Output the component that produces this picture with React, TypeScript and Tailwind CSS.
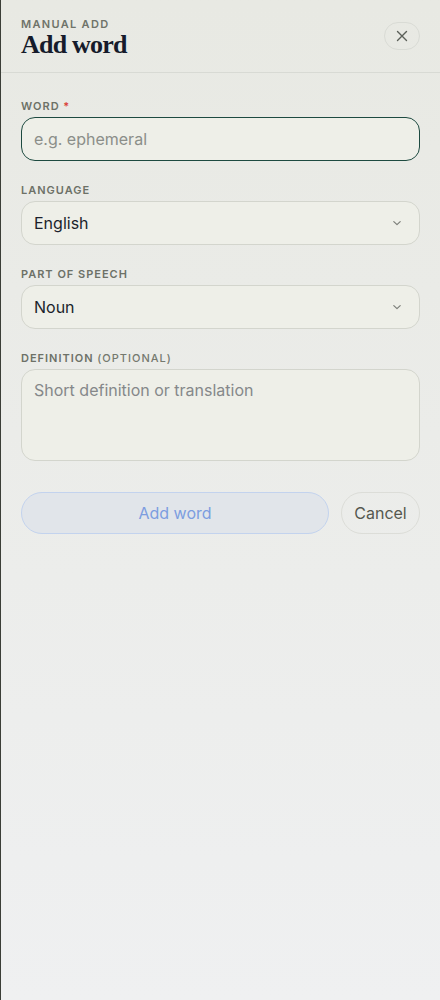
import React from "react";

function Chevron() {
  return (
    <svg width="10" height="10" viewBox="0 0 10 10" fill="none" className="absolute right-[17px] top-1/2 -translate-y-1/2">
      <path d="M1.8 3.6 L5 6.6 L8.2 3.6" stroke="#7c7f79" strokeWidth="1.2" strokeLinecap="round" strokeLinejoin="round" />
    </svg>
  );
}

const labelCls =
  "block mb-[3px] pt-[1px] text-[11px] leading-4 font-semibold tracking-[0.09em] uppercase text-[#6d7167]";

export default function App() {
  return (
    <div
      className="w-[440px] h-[1000px] border-l border-[#3b3e37] bg-gradient-to-b from-[#e8e9e3] to-[#eff0f1] flex flex-col"
      style={{ fontFamily: "Inter, 'Liberation Sans', sans-serif" }}
    >
      <header className="h-[73px] border-b border-[#d8dad4] flex items-center justify-between pl-5 pr-5">
        <div className="flex flex-col pt-[3px]">
          <span className="text-[11px] leading-[14px] font-semibold tracking-[0.12em] text-[#6f7369]">MANUAL ADD</span>
          <h1
            className="text-[26px] leading-[28px] font-bold tracking-[-0.03em] text-[#161b2b]"
            style={{ fontFamily: "'Liberation Serif', 'DejaVu Serif', serif" }}
          >
            Add word
          </h1>
        </div>
        <button className="w-9 h-[28px] rounded-full border border-[#d9dbd5] flex items-center justify-center">
          <svg width="14" height="14" viewBox="0 0 14 14" fill="none">
            <path d="M2.5 2.5 L11.5 11.5 M11.5 2.5 L2.5 11.5" stroke="#5b5f58" strokeWidth="1.4" strokeLinecap="round" />
          </svg>
        </button>
      </header>

      <div className="px-5 pt-6 flex flex-col gap-5">
        <div>
          <label className={labelCls}>
            Word <span className="text-[#d9413a]">*</span>
          </label>
          <div className="h-[44px] rounded-[14px] border-[1.5px] border-[#1d4a40] bg-[#eeefe8] flex items-center px-3">
            <span className="text-[16px] text-[#8b8e89]">e.g. ephemeral</span>
          </div>
        </div>

        <div>
          <label className={labelCls}>Language</label>
          <div className="relative h-[44px] rounded-[14px] border border-[#d3d5cd] bg-[#eeefe8] flex items-center px-3">
            <span className="text-[16px] text-[#1b1f2c]">English</span>
            <Chevron />
          </div>
        </div>

        <div>
          <label className={labelCls}>Part of speech</label>
          <div className="relative h-[44px] rounded-[14px] border border-[#d3d5cd] bg-[#eeefe8] flex items-center px-3">
            <span className="text-[16px] text-[#1b1f2c]">Noun</span>
            <Chevron />
          </div>
        </div>

        <div>
          <label className={labelCls}>
            Definition <span className="font-medium text-[#75796f]">(optional)</span>
          </label>
          <div className="h-[92px] rounded-[14px] border border-[#d3d5cd] bg-[#eeefe8] px-3 pt-[8px]">
            <span className="text-[16px] text-[#85888a]">Short definition or translation</span>
          </div>
        </div>

        <div className="flex gap-3 pt-[11px]">
          <button className="flex-1 h-[42px] rounded-full border border-[#c3d3ee] bg-[#e1e5ea] text-[16px] text-[#7c9de0]">
            Add word
          </button>
          <button className="w-[79px] h-[42px] rounded-full border border-[#dcddd8] text-[16px] text-[#55584f]">
            Cancel
          </button>
        </div>
      </div>
    </div>
  );
}
